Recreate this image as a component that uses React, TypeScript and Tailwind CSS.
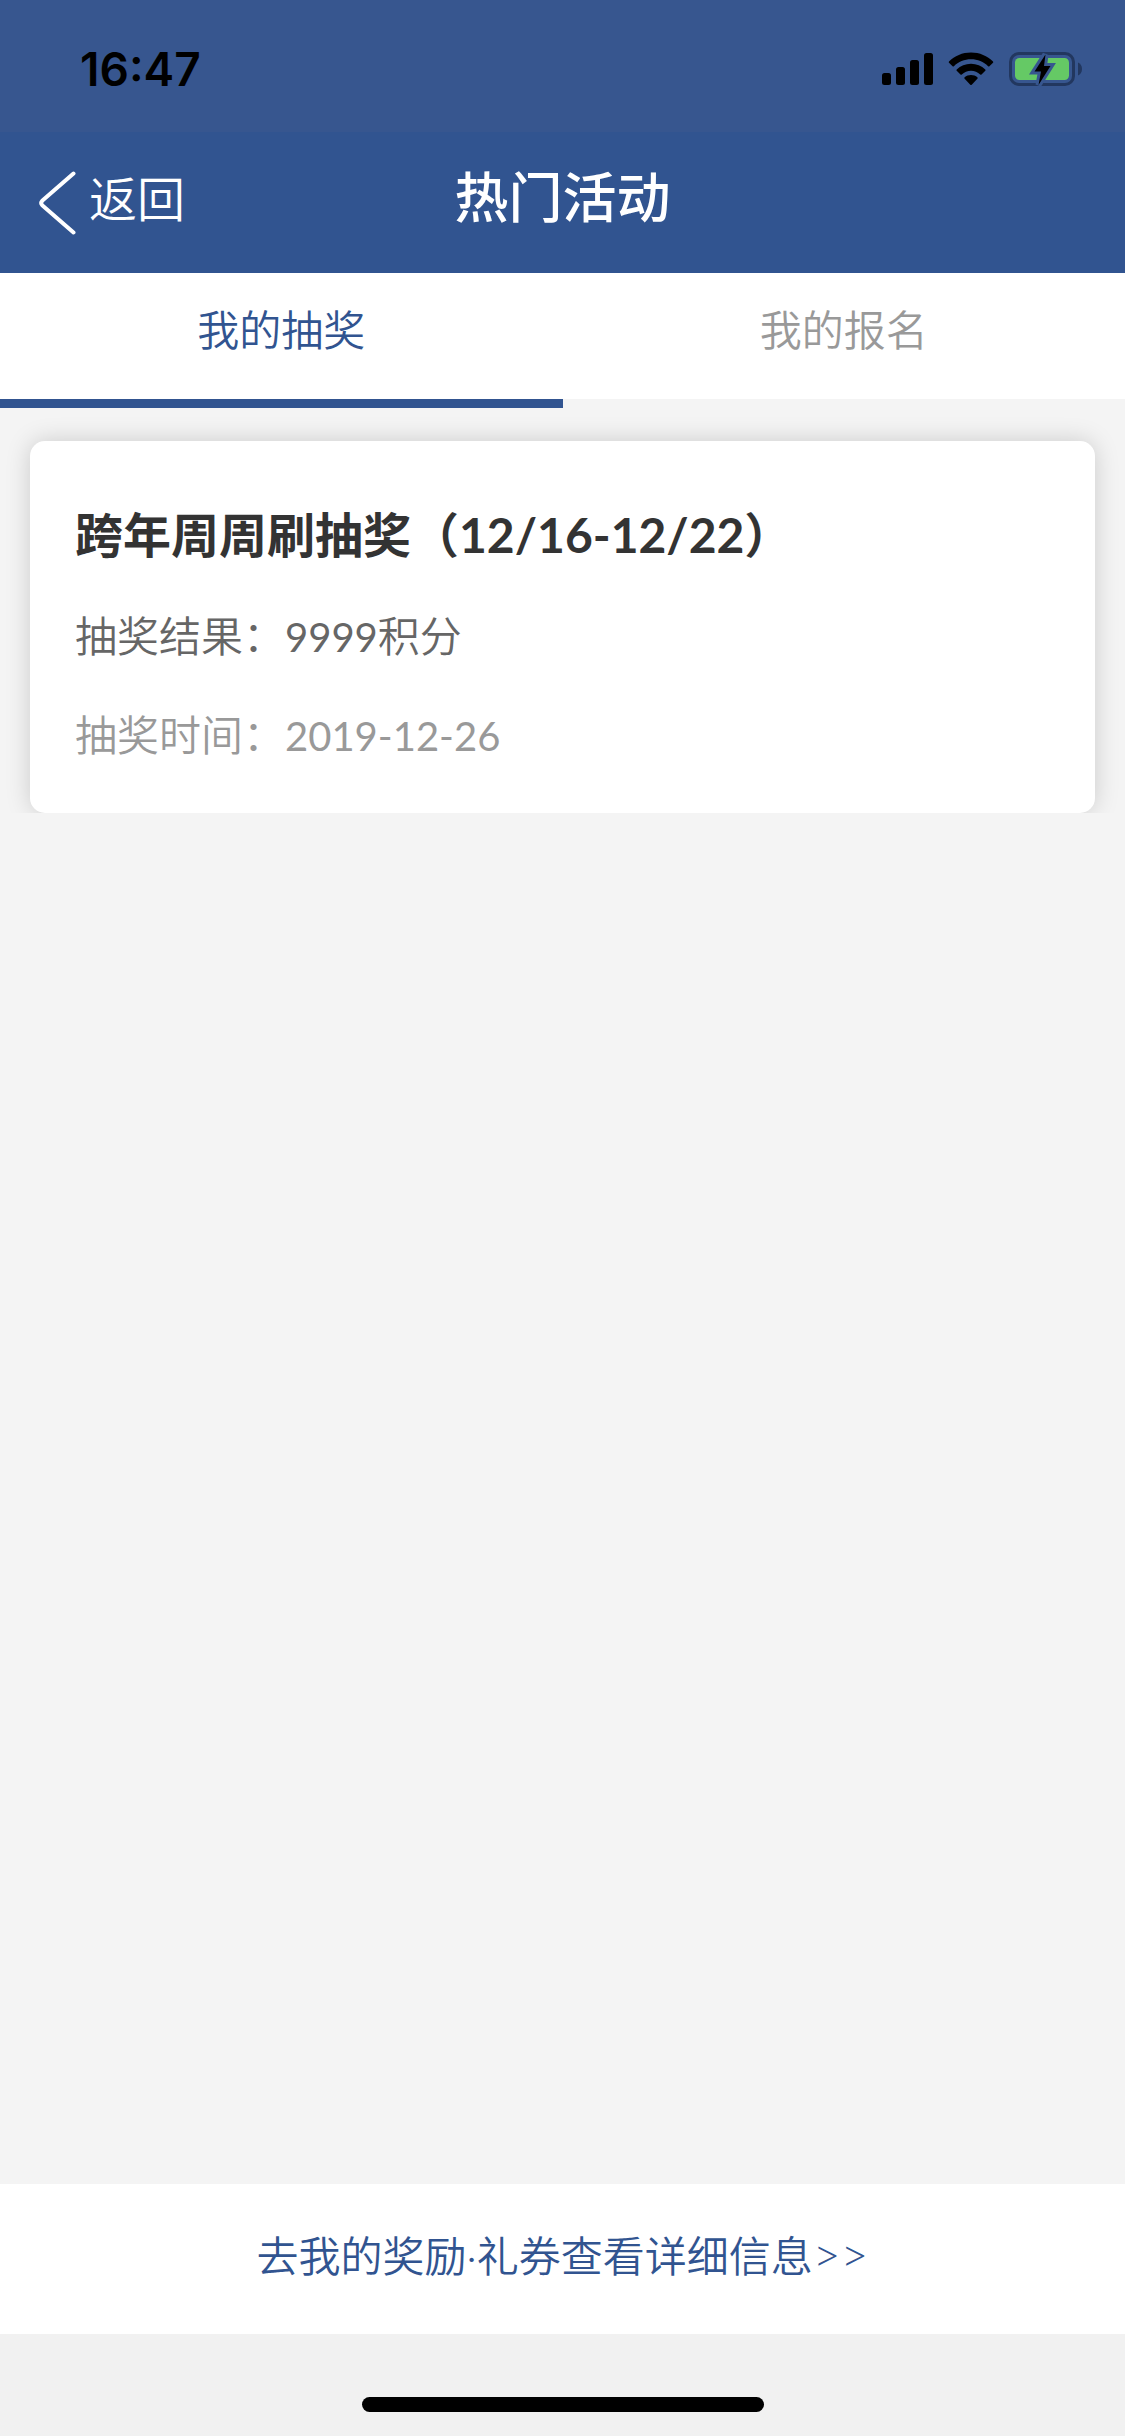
import React, { useState } from 'react';

const TABS = ['我的抽奖', '我的报名'];

const RECORDS = [
  { id: 1, title: '跨年周周刷抽奖（12/16-12/22）', amount: '9999', unit: '积分', date: '2019-12-26' },
];

const SignalIcon: React.FC = () => (
  <svg width="51" height="32" viewBox="0 0 51 32" aria-hidden="true">
    <rect x="0" y="20" width="9" height="12" rx="2.5" />
    <rect x="14" y="14" width="9" height="18" rx="2.5" />
    <rect x="28" y="7" width="9" height="25" rx="2.5" />
    <rect x="42" y="0" width="9" height="32" rx="2.5" />
  </svg>
);

const WifiIcon: React.FC = () => (
  <svg width="46" height="34" viewBox="0 0 46 34" aria-hidden="true">
    <path d="M23 0.5C31.6 0.5 39.4 3.9 45 9.4Q45.6 10 45 10.7L41.4 14.2Q40.8 14.8 40.1 14.2C35.6 9.9 29.6 7.3 23 7.3S10.4 9.9 5.9 14.2Q5.2 14.8 4.6 14.2L1 10.7Q0.4 10 1 9.4C6.6 3.9 14.4 0.5 23 0.5Z" />
    <path d="M23 11.8C28.5 11.8 33.5 13.9 37.3 17.4Q37.9 18 37.3 18.7L33.5 22.4Q32.9 23 32.2 22.4C29.8 20.2 26.5 18.7 23 18.7S16.2 20.2 13.8 22.4Q13.1 23 12.5 22.4L8.7 18.7Q8.1 18 8.7 17.4C12.5 13.9 17.5 11.8 23 11.8Z" />
    <path d="M23 23C25.4 23 27.7 23.9 29.4 25.3Q30 26 29.4 26.7L23.7 32.7Q23 33.3 22.3 32.7L16.6 26.7Q16 26 16.6 25.3C18.3 23.9 20.6 23 23 23Z" />
  </svg>
);

const BatteryIcon: React.FC = () => (
  <svg width="73" height="38" viewBox="0 0 73 38" aria-hidden="true">
    <rect x="1.5" y="3.5" width="63" height="31" rx="8.5" fill="none" stroke="#22375f" strokeWidth="3" />
    <path d="M69 12.5C71.5 13.5 73 16 73 19S71.5 24.5 69 25.5Z" fill="#22375f" />
    <rect x="6" y="8" width="54" height="22" rx="4.5" fill="#65c965" />
    <path
      d="M36.5 4.5L25.5 21.5H32L29.5 35L41.5 16H35Z"
      fill="#000"
      stroke="#37568f"
      strokeWidth="6"
      paintOrder="stroke"
    />
  </svg>
);

const StatusBar: React.FC = () => (
  <div className="flex h-[132px] items-center justify-between bg-[#37568f] pl-20 pr-[43px] pb-[6px] pt-3 text-black">
    <span className="font-['Inter',sans-serif] text-[46px] leading-[60px] font-semibold">16:47</span>
    <div className="flex items-center gap-[15px]">
      <SignalIcon />
      <WifiIcon />
      <BatteryIcon />
    </div>
  </div>
);

const NavBar: React.FC = () => (
  <header className="grid h-[141px] grid-cols-3 items-center bg-[#315490] px-[39px] text-white">
    <button type="button" className="flex items-center gap-[13px] text-[48px] leading-[60px] font-[350]">
      <svg width="37" height="64" viewBox="0 0 37 64" fill="none" aria-hidden="true">
        <path d="M34.5 2.5L3.2 29.8Q1.2 32 3.2 34.2L34.5 61.5" stroke="currentColor" strokeWidth="4" strokeLinecap="round" strokeLinejoin="round" />
      </svg>
      <span className="pb-2">返回</span>
    </button>
    <h1 className="pb-[9px] text-center text-[54px] leading-[60px] font-medium">热门活动</h1>
  </header>
);

const App: React.FC = () => {
  const [active, setActive] = useState(0);

  return (
    <div className="flex min-h-screen flex-col bg-[#f4f4f4] font-['Lato','Noto_Sans_CJK_SC',sans-serif]">
      <StatusBar />
      <NavBar />

      <nav className="relative z-10 grid grid-cols-2 items-start bg-white">
        {TABS.map((tab, index) => (
          <button
            key={tab}
            type="button"
            onClick={() => setActive(index)}
            className={`pt-[27px] pb-[39px] text-[42px] leading-[60px] font-[350] ${
              active === index ? '-mb-[9px] border-b-[9px] border-[#315490] text-[#315490]' : 'text-[#999999]'
            }`}
          >
            {tab}
          </button>
        ))}
      </nav>

      <main className="flex-1">
        <ul className="overflow-hidden px-[30px] pt-[42px]">
          {RECORDS.map((record) => (
            <li key={record.id} className="rounded-[15px] bg-white px-[45px] pt-16 pb-12 shadow-[0_0_24px_rgba(0,0,0,0.17)]">
              <h2 className="text-[48px] leading-[60px] font-bold text-[#333333]">{record.title}</h2>
              <p className="mt-[41px] text-[42px] leading-[60px] font-[350] text-[#666666]">
                抽奖结果：<span className="text-[40px] leading-none font-normal">{record.amount}</span>{record.unit}
              </p>
              <p className="mt-[39px] text-[42px] leading-[60px] font-[350] text-[#999999]">
                抽奖时间：<span className="text-[40px] leading-none font-normal">{record.date}</span>
              </p>
            </li>
          ))}
        </ul>
      </main>

      <footer className="bg-[#f1f1f1]">
        <a href="#rewards" className="block bg-white pt-[42px] pb-12 text-center text-[42px] leading-[60px] font-[350] text-[#315490]">
          去我的奖励·礼券查看详细信息<span className="text-[48px] leading-none">&gt;&gt;</span>
        </a>
        <div className="flex justify-center pt-[63px] pb-6">
          <div className="h-[15px] w-[402px] rounded-full bg-black" />
        </div>
      </footer>
    </div>
  );
};

export default App;
